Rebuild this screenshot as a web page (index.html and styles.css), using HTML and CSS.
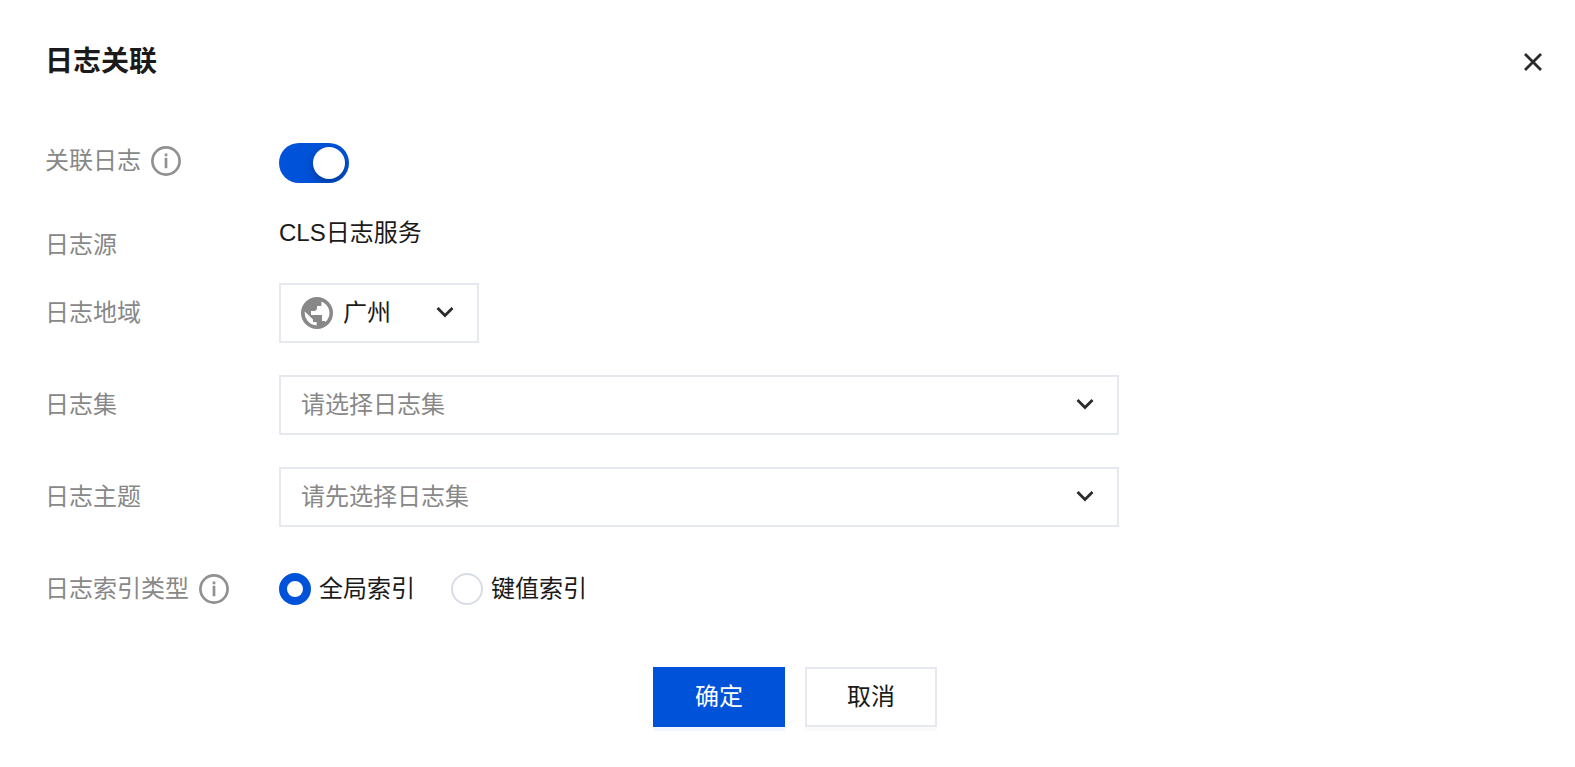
FILE: index.html
```html
<!DOCTYPE html>
<html lang="zh-CN">
<head>
    <meta charset="UTF-8">
    <meta name="viewport" content="width=device-width, initial-scale=1.0">
    <title>日志关联</title>
    <link rel="stylesheet" href="styles.css">
</head>
<body>
    <div class="dialog" role="dialog" aria-labelledby="dialog-title">
        <div class="header">
            <h1 id="dialog-title">日志关联</h1>
            <button class="close" type="button" aria-label="关闭">
                <svg width="24" height="24" viewBox="0 0 24 24"><path d="M4 4l16 16M20 4L4 20"/></svg>
            </button>
        </div>
        <form class="form">
            <div class="row">
                <div class="name">
                    <label for="relate">关联日志</label>
                    <svg class="info" viewBox="0 0 30 30"><circle cx="15" cy="15" r="13.6"/><path d="M15 11.8v10.4M15 7.4v2.8"/></svg>
                </div>
                <input class="switch" id="relate" type="checkbox" role="switch" checked>
            </div>
            <div class="row row-source">
                <div class="name">日志源</div>
                <div class="value">CLS日志服务</div>
            </div>
            <div class="row row-field">
                <div class="name"><label for="region">日志地域</label></div>
                <div class="select region">
                    <svg class="globe" viewBox="0 0 16 16"><path fill-rule="evenodd" d="M8 0a8 8 0 1 1 0 16A8 8 0 0 1 8 0zM10.2 2.2v2.3H8V6L7 7H5v2h5.5v3h1.3l.6.4A6.2 6.2 0 0 0 10.2 2.2zM1.9 7.2A6.2 6.2 0 0 0 7.8 14.2V12.5H6V11.2z"/></svg>
                    <select id="region">
                        <option>广州</option>
                    </select>
                    <svg class="arrow" viewBox="0 0 18 12"><path d="M1.5 2L9 9.5 16.5 2"/></svg>
                </div>
            </div>
            <div class="row row-field">
                <div class="name"><label for="logset">日志集</label></div>
                <div class="select">
                    <select class="empty" id="logset">
                        <option>请选择日志集</option>
                    </select>
                    <svg class="arrow" viewBox="0 0 18 12"><path d="M1.5 2L9 9.5 16.5 2"/></svg>
                </div>
            </div>
            <div class="row row-field">
                <div class="name"><label for="topic">日志主题</label></div>
                <div class="select">
                    <select class="empty" id="topic">
                        <option>请先选择日志集</option>
                    </select>
                    <svg class="arrow" viewBox="0 0 18 12"><path d="M1.5 2L9 9.5 16.5 2"/></svg>
                </div>
            </div>
            <div class="row row-field" role="radiogroup" aria-labelledby="index-name">
                <div class="name">
                    <span id="index-name">日志索引类型</span>
                    <svg class="info" viewBox="0 0 30 30"><circle cx="15" cy="15" r="13.6"/><path d="M15 11.8v10.4M15 7.4v2.8"/></svg>
                </div>
                <div class="radios">
                    <label><input type="radio" name="index" checked>全局索引</label>
                    <label><input type="radio" name="index">键值索引</label>
                </div>
            </div>
            <div class="footer">
                <button class="btn primary" type="button">确定</button>
                <button class="btn" type="button">取消</button>
            </div>
        </form>
    </div>
</body>
</html>
```

FILE: styles.css
```css
* {
    margin: 0;
    padding: 0;
    box-sizing: border-box;
}
body {
    background-color: #fff;
    color: #1a1a1a;
    font: 24px/36px "Liberation Sans", "Noto Sans CJK SC", sans-serif;
}
input, select, button {
    font: inherit;
    color: inherit;
    appearance: none;
    border-radius: 0;
}
svg {
    display: block;
    flex: none;
}
.dialog {
    padding: 42px 30px 36px 45px;
}
.header {
    display: flex;
    justify-content: space-between;
    align-items: center;
    height: 40px;
    margin-bottom: 61px;
}
.header h1 {
    font-size: 28px;
    font-weight: bold;
}
.close {
    border: 0;
    background: none;
    cursor: pointer;
}
.close path {
    fill: none;
    stroke: #2b2b2b;
    stroke-width: 2.8;
}
.row {
    display: flex;
    margin-bottom: 32px;
}
.name {
    display: flex;
    align-items: center;
    gap: 10px;
    flex: none;
    width: 234px;
    height: 36px;
    color: #888;
}
.info {
    width: 30px;
    height: 30px;
    fill: none;
    stroke: #919191;
    stroke-width: 2.7;
}

/* 开关 */
.switch {
    width: 70px;
    height: 40px;
    padding: 4px;
    border-radius: 20px;
    background-color: #0052d9;
    overflow: hidden;
    cursor: pointer;
}
.switch::before {
    content: "";
    display: block;
    width: 32px;
    height: 32px;
    border-radius: 50%;
    background-color: #fff;
    box-shadow: 0 4px 8px rgba(0, 0, 0, .3);
}
.switch:checked::before {
    margin-left: auto;
}

.row-source {
    margin-bottom: 20px;
}
.row-source .name {
    height: 48px;
    padding-top: 12px;
}
.row-field .name {
    height: 60px;
}

/* 下拉框 */
.select {
    position: relative;
    flex: 1;
    max-width: 840px;
    height: 60px;
}
.region {
    max-width: 200px;
}
.select select {
    width: 100%;
    height: 60px;
    padding: 0 56px 0 20px;
    border: 2px solid #e5e8ef;
    background-color: #fff;
}
.region select {
    padding-left: 62px;
}
.select .empty {
    color: #888;
}
.globe {
    position: absolute;
    left: 22px;
    top: 14px;
    width: 32px;
    height: 32px;
    fill: #888;
    pointer-events: none;
}
.arrow {
    position: absolute;
    right: 25px;
    top: 23px;
    width: 18px;
    height: 12px;
    fill: none;
    stroke: #2b2b2b;
    stroke-width: 2.8;
    pointer-events: none;
}

/* 单选 */
.radios {
    display: flex;
    align-items: center;
    gap: 36px;
}
.radios label {
    display: flex;
    align-items: center;
    gap: 8px;
}
.radios input {
    width: 32px;
    height: 32px;
    border: 2px solid #d8dce6;
    border-radius: 50%;
}
.radios input:checked {
    border: 8px solid #0052d9;
}

.footer {
    display: flex;
    justify-content: center;
    gap: 20px;
    margin-top: 48px;
}
.btn {
    width: 132px;
    height: 60px;
    border: 2px solid #e5e8ef;
    background-color: #fff;
    box-shadow: 0 4px 0 #fafafa;
    cursor: pointer;
}
.primary {
    border-color: #0052d9;
    background-color: #0052d9;
    box-shadow: 0 4px 0 #f2f6fd;
    color: #fff;
}
```
